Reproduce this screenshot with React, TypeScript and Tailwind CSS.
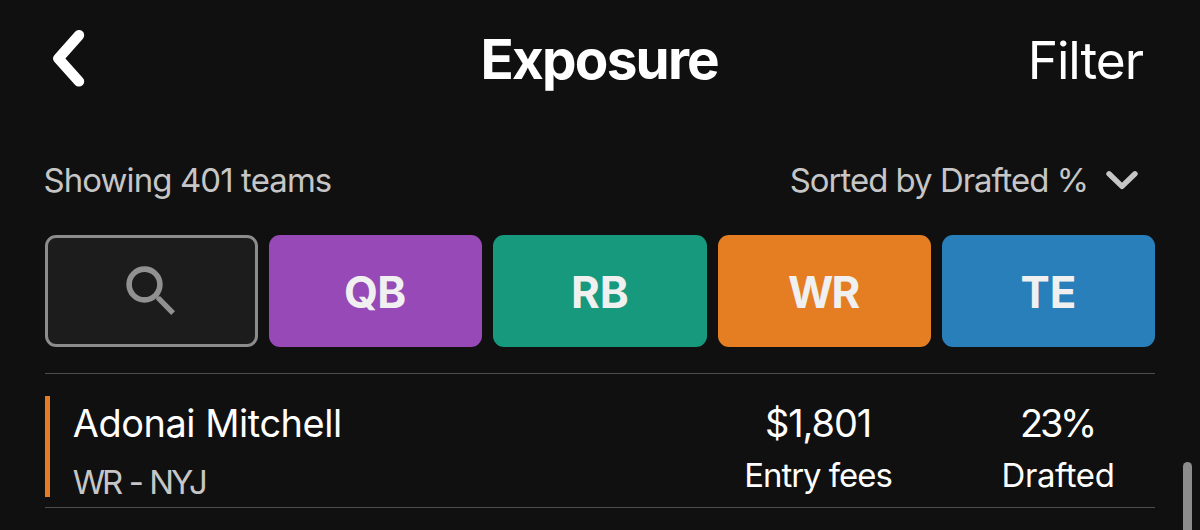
const positions = [
  { label: 'QB', style: 'bg-[#9649b7] tracking-[-0.8px] pr-[2px]' },
  { label: 'RB', style: 'bg-[#16997d] tracking-[0px]' },
  { label: 'WR', style: 'bg-[#e57e22] tracking-[-2px] pr-[2px]' },
  { label: 'TE', style: 'bg-[#287fb9] tracking-[0px]' },
];

function BackIcon() {
  return (
    <svg width="36" height="60" viewBox="0 0 36 60" fill="none" className="block">
      <path d="M29 6.2 L8.4 29.5 L29 52.4" stroke="#fff" strokeWidth="10.4" strokeLinecap="round" strokeLinejoin="round" />
    </svg>
  );
}

function ChevronDownIcon() {
  return (
    <svg width="34" height="20" viewBox="0 0 34 20" fill="none" className="block">
      <path d="M4 3.8 L17 16.4 L30 3.8" stroke="#c6c6c6" strokeWidth="5.4" strokeLinecap="round" strokeLinejoin="round" />
    </svg>
  );
}

function SearchIcon() {
  return (
    <svg width="50" height="50" viewBox="0 0 50 50" fill="none" className="block">
      <circle cx="18.5" cy="18.5" r="15.4" stroke="#919191" strokeWidth="5.6" />
      <path d="M30 33.6 L31 30.6 L34.2 30.2 L49 45.2 L45.2 49 Z" fill="#919191" />
    </svg>
  );
}

function Stat({ value, label, className, valueClass, labelClass }: { value: string; label: string; className: string; valueClass: string; labelClass: string }) {
  return (
    <div className={`flex flex-col items-center whitespace-nowrap text-white ${className}`}>
      <div className={`text-[37.9px] leading-[42px] ${valueClass}`}>{value}</div>
      <div className={`mt-[11px] text-[32.9px] leading-[40px] ${labelClass}`}>{label}</div>
    </div>
  );
}

export default function App() {
  return (
    <main className="relative h-[530px] w-[1200px] overflow-hidden bg-[#101010] px-[45px] font-['Inter',sans-serif] text-white">
      <header className="grid h-[118px] grid-cols-[1fr_auto_1fr] items-center">
        <button className="justify-self-start pl-[4.5px]" aria-label="Back">
          <BackIcon />
        </button>
        <h1 className="pr-[1.5px] text-[54.8px] leading-none font-bold tracking-[-1.78px]">Exposure</h1>
        <button className="justify-self-end pt-[3px] pr-[12px] text-[51.4px] leading-none tracking-[-1.04px]">Filter</button>
      </header>

      <div className="mt-[42px] flex h-[40px] items-center justify-between text-[32.9px] leading-[40px] whitespace-nowrap text-[#c6c6c6]">
        <div className="-ml-[1.5px] tracking-[-0.87px]">Showing 401 teams</div>
        <button className="flex items-center gap-[17px] pr-[16px]">
          <span className="tracking-[-0.98px]">Sorted by Drafted %</span>
          <ChevronDownIcon />
        </button>
      </div>

      <div className="mt-[35px] grid h-[112px] grid-cols-5 gap-[11.2px]">
        <button className="flex items-center justify-center rounded-[11px] border-[3px] border-[#8c8c8c] bg-[#1c1c1c] pr-[2px]" aria-label="Search">
          <SearchIcon />
        </button>
        {positions.map((p) => (
          <button key={p.label} className={`rounded-[11px] pt-[3px] text-[43.8px] leading-none font-bold text-[#f0f0f0] ${p.style}`}>
            {p.label}
          </button>
        ))}
      </div>

      <section className="mt-[26px] flex h-[135px] border-y border-[#4d4d4d] pt-[22px]">
        <div className="h-[100.5px] w-[5.3px] shrink-0 bg-[#e57e22]" />
        <div className="flex-1 pt-[6px] pl-[22.5px] whitespace-nowrap">
          <div className="text-[37.9px] leading-[42px] tracking-[-0.44px]">Adonai Mitchell</div>
          <div className="mt-[18px] text-[32.9px] leading-[40px] tracking-[-3.1px] text-[#c6c6c6] [word-spacing:2.4px]">WR - NYJ</div>
        </div>
        <div className="flex gap-[22px] pt-[6px]">
          <Stat value="$1,801" label="Entry fees" className="w-[240px] -translate-x-[1px]" valueClass="tracking-[-1.05px]" labelClass="tracking-[-1px]" />
          <Stat value="23%" label="Drafted" className="w-[194px]" valueClass="tracking-[-3.3px] pr-[2px]" labelClass="tracking-[-0.36px]" />
        </div>
      </section>

      <div className="absolute top-[462px] left-[1183px] h-[100px] w-[9px] rounded-full bg-[#8c8c8c]" />
    </main>
  );
}
